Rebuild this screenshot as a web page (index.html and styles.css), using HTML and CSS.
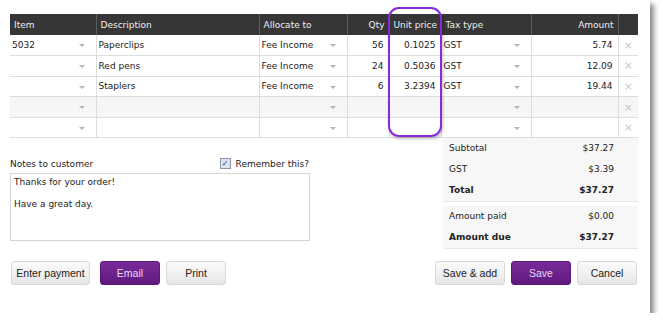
FILE: index.html
```html
<!DOCTYPE html>
<html lang="en">
<head>
    <meta charset="UTF-8">
    <title>Invoice lines</title>
    <link rel="stylesheet" href="styles.css">
</head>
<body>
    <div class="card">
        <div class="grid-wrap">
            <table class="lines">
                <thead>
                    <tr>
                        <th class="c-item">Item</th>
                        <th class="c-desc">Description</th>
                        <th class="c-acc">Allocate to</th>
                        <th class="c-qty num">Qty</th>
                        <th class="c-price num">Unit price</th>
                        <th class="c-tax">Tax type</th>
                        <th class="c-amt num">Amount</th>
                        <th class="c-del"></th>
                    </tr>
                </thead>
                <tbody>
                    <tr>
                        <td class="drop">5032</td>
                        <td>Paperclips</td>
                        <td class="drop">Fee Income</td>
                        <td class="num">56</td>
                        <td class="num">0.1025</td>
                        <td class="drop">GST</td>
                        <td class="num">5.74</td>
                        <td class="del">&times;</td>
                    </tr>
                    <tr>
                        <td class="drop"></td>
                        <td>Red pens</td>
                        <td class="drop">Fee Income</td>
                        <td class="num">24</td>
                        <td class="num">0.5036</td>
                        <td class="drop">GST</td>
                        <td class="num">12.09</td>
                        <td class="del">&times;</td>
                    </tr>
                    <tr>
                        <td class="drop"></td>
                        <td>Staplers</td>
                        <td class="drop">Fee Income</td>
                        <td class="num">6</td>
                        <td class="num">3.2394</td>
                        <td class="drop">GST</td>
                        <td class="num">19.44</td>
                        <td class="del">&times;</td>
                    </tr>
                    <tr class="alt">
                        <td class="drop"></td>
                        <td></td>
                        <td class="drop"></td>
                        <td></td>
                        <td></td>
                        <td class="drop"></td>
                        <td></td>
                        <td class="del">&times;</td>
                    </tr>
                    <tr>
                        <td class="drop"></td>
                        <td></td>
                        <td class="drop"></td>
                        <td></td>
                        <td></td>
                        <td class="drop"></td>
                        <td></td>
                        <td class="del">&times;</td>
                    </tr>
                </tbody>
            </table>
            <div class="highlight"></div>
        </div>

        <div class="lower">
            <div class="notes">
                <div class="notes-head">
                    <label for="notes">Notes to customer</label>
                    <span class="remember"><span class="check">&#10003;</span>Remember this?</span>
                </div>
                <div class="notes-box" id="notes">Thanks for your order!<br><br>Have a great day.</div>
            </div>
            <div class="totals">
                <div class="tot-group">
                    <div class="tot-row"><span>Subtotal</span><span>$37.27</span></div>
                    <div class="tot-row"><span>GST</span><span>$3.39</span></div>
                    <div class="tot-row strong"><span>Total</span><span>$37.27</span></div>
                </div>
                <div class="tot-group">
                    <div class="tot-row"><span>Amount paid</span><span>$0.00</span></div>
                    <div class="tot-row strong"><span>Amount due</span><span>$37.27</span></div>
                </div>
            </div>
        </div>

        <div class="actions">
            <div class="btn-set">
                <button class="btn b-pay">Enter payment</button>
                <button class="btn primary b-email">Email</button>
                <button class="btn b-print">Print</button>
            </div>
            <div class="btn-set">
                <button class="btn b-saveadd">Save &amp; add</button>
                <button class="btn primary b-save">Save</button>
                <button class="btn b-cancel">Cancel</button>
            </div>
        </div>
    </div>
</body>
</html>
```

FILE: styles.css
```css
body {
    margin: 0;
    background: #fff;
    font-family: "DejaVu Sans", Verdana, sans-serif;
    font-size: 9px;
    color: #222;
}
.card {
    width: 650px;
    height: 313px;
    background: #fff;
    box-shadow: 4px 4px 5px rgba(0, 0, 0, 0.45);
    box-sizing: border-box;
    padding-top: 14px;
}
.grid-wrap {
    position: relative;
    margin-left: 10px;
    width: 628px;
}
.lines {
    width: 628px;
    border-collapse: collapse;
    table-layout: fixed;
}
.lines th, .lines td {
    box-sizing: border-box;
    white-space: nowrap;
}
.lines th {
    background: #363636;
    color: #eee;
    font-weight: normal;
    text-align: left;
    height: 21px;
    padding: 0 4px;
    border-left: 1px solid #5c5c5c;
}
.lines th:first-child {
    border-left: none;
}
.lines td {
    height: 20.6px;
    padding: 0 4px 0 2px;
    border-left: 1px solid #ddd;
    border-bottom: 1px solid #ddd;
}
.lines td:first-child {
    border-left: none;
}
.lines .num {
    text-align: right;
    padding-right: 5px;
}
.lines th.num {
    padding-right: 4px;
}
.lines tr.alt td {
    background: #f6f6f6;
}
.c-item { width: 86px; }
.c-desc { width: 163px; }
.c-acc { width: 88px; }
.c-qty { width: 42px; }
.c-price { width: 52px; }
.c-tax { width: 90px; }
.c-amt { width: 87px; }
.c-del { width: 20px; }
.lines td.drop {
    position: relative;
}
.lines td.drop::after {
    content: "";
    position: absolute;
    right: 11px;
    top: 9px;
    border-left: 3px solid transparent;
    border-right: 3px solid transparent;
    border-top: 3px solid #b5b5b5;
}
.lines td.del {
    text-align: center;
    color: #c8c8c8;
    font-size: 11px;
    padding: 0;
}
.highlight {
    position: absolute;
    left: 378px;
    top: -7px;
    width: 50px;
    height: 126px;
    border: 2px solid #8a2ad6;
    border-radius: 11px;
    box-shadow: 1px 2px 3px rgba(0, 0, 0, 0.25);
}
.lower {
    display: flex;
    justify-content: space-between;
    margin-left: 10px;
    width: 628px;
}
.notes {
    width: 300px;
    padding-top: 16px;
}
.notes-head {
    display: flex;
    justify-content: space-between;
    align-items: center;
    height: 19px;
    padding-right: 1px;
}
.remember {
    display: flex;
    align-items: center;
}
.check {
    display: inline-block;
    width: 9px;
    height: 9px;
    border: 1px solid #8895b0;
    background: #dde3ee;
    color: #233a6a;
    font-size: 8px;
    line-height: 9px;
    text-align: center;
    margin-right: 5px;
}
.notes-box {
    height: 60px;
    border: 1px solid #d5d5d5;
    padding: 3px 3px;
    line-height: 11px;
}
.totals {
    width: 195px;
}
.tot-group {
    background: #f7f7f7;
    border-bottom: 1px solid #e8e8e8;
}
.tot-group + .tot-group {
    margin-top: 4px;
}
.tot-row {
    display: flex;
    justify-content: space-between;
    height: 21px;
    line-height: 21px;
    padding: 0 24px 0 6px;
}
.tot-row.strong {
    font-weight: bold;
}
.actions {
    display: flex;
    justify-content: space-between;
    margin: 12px 0 0 11px;
    width: 626px;
}
.btn-set {
    display: flex;
    gap: 6px;
}
.btn {
    height: 24px;
    font-family: "Liberation Sans", Arial, sans-serif;
    font-size: 10.5px;
    white-space: nowrap;
    color: #222;
    border: 1px solid #d8d8d8;
    border-radius: 3px;
    background: linear-gradient(#fbfbfb, #e6e6e6);
    padding: 0;
}
.btn.primary {
    background: linear-gradient(#7a2b9a, #5e1a7e);
    border-color: #5a1878;
    color: #e9d8f5;
}
.b-pay { width: 79px; }
.b-email { width: 60px; margin-left: 4px; }
.b-print { width: 60px; }
.b-saveadd { width: 70px; }
.b-save { width: 60px; }
.b-cancel { width: 60px; }
```
